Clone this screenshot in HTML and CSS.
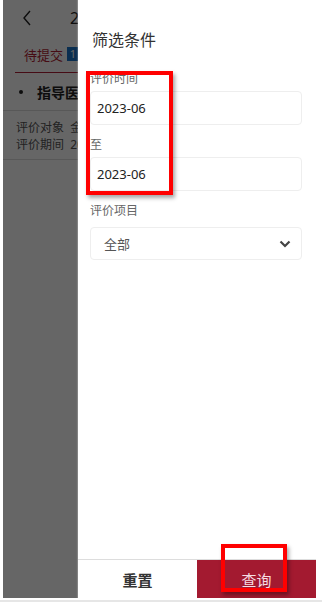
FILE: index.html
```html
<!DOCTYPE html>
<html lang="zh-CN">
  <head>
    <meta charset="UTF-8" />
    <meta name="viewport" content="width=device-width, initial-scale=1.0" />
    <title>筛选条件</title>
    <link rel="stylesheet" href="styles.css">
  </head>
  <body>
    <div class="screen">
      <!-- 底层列表页（被抽屉遮住，只露出左侧一截） -->
      <div class="page">
        <div class="page-header">
          <svg class="back" width="10" height="16" viewBox="0 0 10 16"><path d="M8 1 L2 8 L8 15" fill="none" stroke="#222" stroke-width="1.4"/></svg>
          <span class="page-title">2</span>
        </div>
        <div class="tabs">
          <span class="tab active">待提交</span>
          <span class="badge">1</span>
        </div>
        <div class="item-title"><i></i>指导医师</div>
        <div class="item-info">
          <p>评价对象&nbsp; 金</p>
          <p>评价期间&nbsp; 20</p>
        </div>
      </div>
      <div class="mask"></div>

      <!-- 右侧抽屉 -->
      <div class="drawer">
        <div class="drawer-body">
          <h3 class="drawer-title">筛选条件</h3>
          <div class="field">
            <label>评价时间</label>
            <div class="input">2023-06</div>
          </div>
          <div class="field">
            <label>至</label>
            <div class="input">2023-06</div>
          </div>
          <div class="field field-select">
            <label>评价项目</label>
            <div class="input select">
              <span>全部</span>
              <svg width="12" height="8" viewBox="0 0 12 8"><path d="M1.5 1.5 L6 6 L10.5 1.5" fill="none" stroke="#444" stroke-width="2.2"/></svg>
            </div>
          </div>
        </div>
        <div class="drawer-footer">
          <button class="btn-reset">重置</button>
          <button class="btn-query">查询</button>
        </div>
      </div>

      <!-- 标注框 -->
      <div class="mark mark-time"></div>
      <div class="mark mark-query"></div>
    </div>
    <div class="bottom-line"></div>
  </body>
</html>
```

FILE: styles.css
```css
* {
  box-sizing: border-box;
}

body {
  margin: 0;
  background: #fff;
  font-family: "Noto Sans", "Noto Sans CJK SC", sans-serif;
  color: #222;
}

.screen {
  position: relative;
  width: 313px;
  height: 598px;
  margin-left: 3px;
  overflow: hidden;
  background: #fff;
}

/* 底层页面 */
.page {
  width: 75px;
  overflow: hidden;
  white-space: nowrap;
}

.page-header {
  height: 36px;
  display: flex;
  align-items: center;
  padding-left: 19px;
}

.page-header .back {
  flex: none;
}

.page-header .page-title {
  margin-left: 38px;
  font-size: 16px;
}

.tabs {
  height: 37px;
  margin: 0 0 0 12px;
  display: flex;
  align-items: center;
  border-bottom: 1px solid #b01f35;
  padding-left: 9px;
}

.tab {
  font-size: 13px;
  color: #b01f35;
}

.badge {
  flex: none;
  margin-left: 4px;
  width: 12px;
  height: 14px;
  background: #1a73c9;
  color: #fff;
  font-size: 11px;
  line-height: 14px;
  text-align: center;
}

.item-title {
  height: 38px;
  display: flex;
  align-items: center;
  padding-left: 16px;
  font-size: 14px;
  font-weight: bold;
  border-bottom: 1px solid #ddd;
}

.item-title i {
  flex: none;
  width: 4px;
  height: 4px;
  border-radius: 50%;
  background: #222;
  margin-right: 14px;
}

.item-info {
  padding: 8px 0 6px 13px;
  font-size: 12px;
  color: #555;
  border-bottom: 1px solid #ddd;
}

.item-info p {
  margin: 0;
  line-height: 17px;
}

.mask {
  position: absolute;
  inset: 0;
  background: rgba(0, 0, 0, 0.6);
}

/* 抽屉 */
.drawer {
  position: absolute;
  top: 0;
  bottom: 0;
  left: 75px;
  right: 0;
  background: #fff;
  display: flex;
  flex-direction: column;
  box-shadow: -1px 0 1px rgba(255, 255, 255, 0.2);
}

.drawer-body {
  flex: 1;
  padding: 28px 14px 0 12px;
}

.drawer-title {
  margin: 0 0 18px 2px;
  font-size: 16px;
  font-weight: normal;
  line-height: 24px;
  color: #333;
}

.field label {
  display: block;
  font-size: 12px;
  line-height: 17px;
  color: #666;
  margin-bottom: 4px;
}

.input {
  height: 34px;
  border: 1px solid #eee;
  border-radius: 4px;
  padding: 0 6px;
  display: flex;
  align-items: center;
  font-size: 13px;
  color: #222;
  margin-bottom: 11px;
}

.field-select label {
  margin-bottom: 8px;
}

.input.select {
  height: 33px;
  padding: 0 10px 0 13px;
  justify-content: space-between;
  color: #555;
}

.drawer-footer {
  height: 39px;
  display: flex;
  border-top: 1px solid #ddd;
}

.drawer-footer button {
  flex: 1;
  appearance: none;
  border: none;
  font-family: inherit;
  font-size: 15px;
  padding: 0;
  cursor: pointer;
}

.btn-reset {
  background: #fff;
  color: #333;
  font-weight: bold;
}

.btn-query {
  background: #a31a30;
  color: #f6dde2;
}

/* 标注框 */
.mark {
  position: absolute;
  border: 4px solid #ff0000;
  box-shadow: 2px 3px 4px rgba(0, 0, 0, 0.35);
}

.mark-time {
  left: 83px;
  top: 71px;
  width: 87px;
  height: 124px;
}

.mark-query {
  left: 218px;
  top: 544px;
  width: 66px;
  height: 48px;
}

.bottom-line {
  margin-top: 2px;
  height: 2px;
  background: #e6e6e6;
}
```
